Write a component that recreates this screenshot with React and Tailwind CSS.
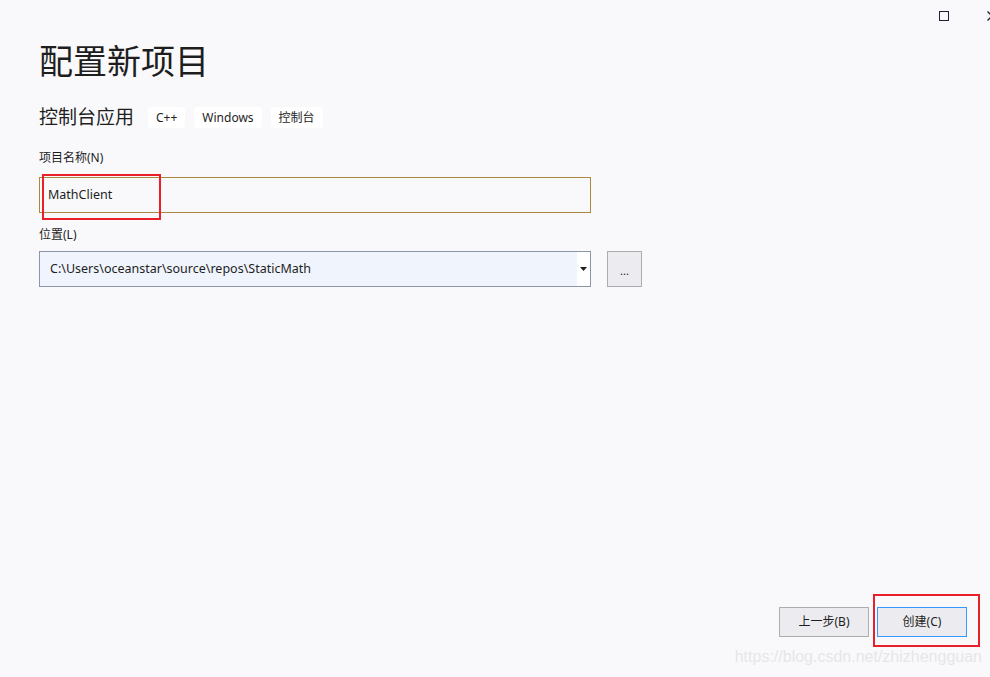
import { ChevronDown } from "lucide-react";

const font = { fontFamily: '"Noto Sans", "Noto Sans CJK SC", sans-serif' };

function Tag({ children }) {
  return <span className="flex h-[21px] items-center rounded-[4px] bg-white px-[8px] text-[12px] text-[#1e1e1e]">{children}</span>;
}

export default function App() {
  return (
    <div className="relative flex h-[677px] w-[990px] flex-col overflow-hidden bg-[#f9f9fb] text-[#1e1e1e]" style={font}>
      {/* 窗口按钮 */}
      <div className="flex h-[32px] items-start justify-end pt-[11px]">
        <div className="h-[10px] w-[10px] border-[1.5px] border-[#1b2434]" />
        <svg width="10" height="10" viewBox="0 0 10 10" className="ml-[38px] mr-[-7px]">
          <path d="M0.5 0.5L9.5 9.5M9.5 0.5L0.5 9.5" stroke="#1b2434" strokeWidth="1.3" />
        </svg>
      </div>

      <div className="flex flex-col px-[39px]">
        <h1 className="mt-[7px] text-[34px] leading-[44px] font-normal">配置新项目</h1>
        <div className="mt-[24px] flex h-[21px] items-center">
          <span className="text-[19px] leading-[21px]">控制台应用</span>
          <div className="ml-[14px] flex gap-[9px]">
            <Tag>C++</Tag>
            <Tag>Windows</Tag>
            <Tag>控制台</Tag>
          </div>
        </div>

        <label className="mt-[22px] text-[12px] leading-[16px]">项目名称(N)</label>
        <div className="relative mt-[11px] flex h-[36px] w-[552px] items-center border border-[#a8893e] bg-[#f9f9fb] px-[8px] text-[12.5px]">
          MathClient
          <div className="absolute left-[2px] top-[-4px] h-[46px] w-[119px] border-2 border-[#e8202a]" />
        </div>

        <label className="mt-[14px] text-[12px] leading-[16px]">位置(L)</label>
        <div className="mt-[8px] flex items-center gap-[16px]">
          <div className="flex h-[36px] w-[552px] items-stretch border border-[#8c96a8]">
            <div className="flex flex-1 items-center bg-[#f0f4fc] px-[10px] text-[12.5px]">C:\Users\oceanstar\source\repos\StaticMath</div>
            <div className="flex w-[13px] items-center justify-center bg-white">
              <svg width="7" height="4" viewBox="0 0 7 4"><path d="M0 0H7L3.5 4Z" fill="#1e1e1e" /></svg>
            </div>
          </div>
          <button className="flex h-[36px] w-[35px] items-end justify-center border border-[#acacac] bg-[#ececf0] pb-[10px] text-[11px] leading-[10px]">...</button>
        </div>
      </div>

      <div className="mt-auto mb-[40px] mr-[23px] flex justify-end gap-[8px]">
        <button className="h-[30px] w-[90px] border border-[#adadad] bg-[#ececf0] text-[12px]">上一步(B)</button>
        <div className="relative">
          <button className="h-[30px] w-[90px] border border-[#3399ff] bg-[#ececf0] text-[12px]">创建(C)</button>
          <div className="absolute left-[-4px] top-[-13px] h-[53px] w-[107px] border-2 border-[#e8202a]" />
        </div>
      </div>

      <div className="absolute bottom-[8px] right-[8px] text-[16px] text-[#e6e6e8]" style={{ fontFamily: '"Liberation Sans", Arial, sans-serif' }}>
        https://blog.csdn.net/zhizhengguan
      </div>
    </div>
  );
}
